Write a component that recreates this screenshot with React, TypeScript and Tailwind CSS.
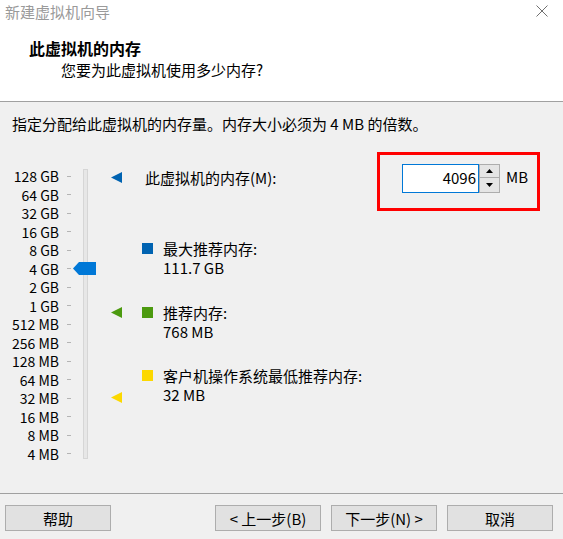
export default function App() {
  const labels = [
    "128 GB", "64 GB", "32 GB", "16 GB", "8 GB", "4 GB", "2 GB", "1 GB",
    "512 MB", "256 MB", "128 MB", "64 MB", "32 MB", "16 MB", "8 MB", "4 MB",
  ];
  return (
    <div className="w-[563px] h-[539px] bg-[#f0f0f0] flex flex-col overflow-hidden font-['Noto_Sans_CJK_SC',sans-serif] text-[15px] leading-[19px] text-black">
      {/* Header */}
      <div className="h-[102px] bg-white border-b border-[#a0a0a0] flex flex-col">
        <div className="flex justify-between items-start pl-[5px] pr-[15px] pt-[2px]">
          <span className="leading-[20px] text-[#9a9a9a]">新建虚拟机向导</span>
          <svg className="mt-[3px]" width="12" height="12" viewBox="0 0 12 12">
            <path d="M0.5 0.5 L11.5 11.5 M11.5 0.5 L0.5 11.5" stroke="#707070" strokeWidth="1" fill="none" />
          </svg>
        </div>
        <div className="mt-[16px] pl-[29px] leading-[20px] text-[16px] font-bold">此虚拟机的内存</div>
        <div className="mt-[2px] pl-[61px] leading-[20px]">您要为此虚拟机使用多少内存?</div>
      </div>

      {/* Description */}
      <div className="mt-[12px] pl-[12px] leading-[20px]">
        指定分配给此虚拟机的内存量。内存大小必须为 4 MB 的倍数。
      </div>

      {/* Main */}
      <div className="mt-[18px] flex">
        {/* Slider */}
        <div className="relative w-[142px] h-[296px] mt-[15px] flex shrink-0">
          <div className="w-[59px] flex flex-col items-end text-[14px]">
            {labels.map((l) => (
              <div key={l} className="h-[18.5px] flex items-center">
                <span className="leading-[16px] whitespace-nowrap">{l}</span>
              </div>
            ))}
          </div>
          <div className="ml-[8px] w-[4px] flex flex-col">
            {labels.map((l) => (
              <div key={l} className="h-[18.5px] flex items-center">
                <div className="w-[4px] h-[1px] bg-[#b4b4b4]" />
              </div>
            ))}
          </div>
          <div className="ml-[12px] mt-[2px] h-[290px] w-[5px] border border-[#d6d6d6] bg-[#e7e7e7]" />

          {/* thumb */}
          <svg className="absolute left-[73px] top-[95px]" width="23" height="13" viewBox="0 0 23 13">
            <polygon points="0,6.5 6,0 23,0 23,13 6,13" fill="#0078d7" />
          </svg>
          {/* markers */}
          <svg className="absolute left-[111px] top-[5px]" width="11" height="11" viewBox="0 0 11 11">
            <polygon points="0,5.5 11,0 11,11" fill="#0063b1" />
          </svg>
          <svg className="absolute left-[111px] top-[140px]" width="11" height="11" viewBox="0 0 11 11">
            <polygon points="0,5.5 11,0 11,11" fill="#4c9a0f" />
          </svg>
          <svg className="absolute left-[111px] top-[225px]" width="11" height="11" viewBox="0 0 11 11">
            <polygon points="0,5.5 11,0 11,11" fill="#fcd800" />
          </svg>
        </div>

        {/* Right column */}
        <div className="flex-1 flex flex-col">
          <div className="flex items-start">
            <span className="ml-[3px] mt-[15.5px] whitespace-nowrap">此虚拟机的内存(M):</span>
            <div className="ml-auto mr-[23px] w-[163px] h-[59px] border-[3px] border-[#ff0000] pl-[22px] pt-[9px] flex items-start">
              <div className="w-[77px] h-[29px] border border-[#0078d7] bg-white text-right pr-[2px] leading-[26px]">
                4096
              </div>
              <div className="w-[21px] h-[29px] flex flex-col">
                <div className="h-[14px] border border-[#adadad] bg-[#e5e5e5] flex items-center justify-center">
                  <svg width="7" height="4" viewBox="0 0 7 4">
                    <polygon points="3.5,0 7,4 0,4" fill="#000" />
                  </svg>
                </div>
                <div className="h-[15px] border border-t-0 border-[#adadad] bg-[#e5e5e5] flex items-center justify-center">
                  <svg width="7" height="4" viewBox="0 0 7 4">
                    <polygon points="0,0 7,0 3.5,4" fill="#000" />
                  </svg>
                </div>
              </div>
              <span className="ml-[6px] mt-[3px]">MB</span>
            </div>
          </div>

          <div className="mt-[27.5px] flex items-start">
            <div className="w-[11px] h-[11px] mt-[4px] bg-[#0063b1] shrink-0" />
            <div className="ml-[10px] flex flex-col">
              <span>最大推荐内存:</span>
              <span>111.7 GB</span>
            </div>
          </div>
          <div className="mt-[26.5px] flex items-start">
            <div className="w-[11px] h-[11px] mt-[4px] bg-[#4c9a0f] shrink-0" />
            <div className="ml-[10px] flex flex-col">
              <span>推荐内存:</span>
              <span>768 MB</span>
            </div>
          </div>
          <div className="mt-[25px] flex items-start">
            <div className="w-[11px] h-[11px] mt-[4px] bg-[#fcd800] shrink-0" />
            <div className="ml-[10px] flex flex-col">
              <span>客户机操作系统最低推荐内存:</span>
              <span>32 MB</span>
            </div>
          </div>
        </div>
      </div>

      {/* Footer */}
      <div className="mt-auto border-t border-[#a0a0a0] pt-[11px] pb-[8px] pl-[5px] pr-[10px] flex justify-between">
        <button className="w-[106px] h-[26px] border border-[#adadad] bg-[#e1e1e1] flex items-center justify-center">
          帮助
        </button>
        <div className="flex gap-[10px]">
          <button className="w-[106px] h-[26px] border border-[#adadad] bg-[#e1e1e1] flex items-center justify-center">
            &lt; 上一步(B)
          </button>
          <button className="w-[106px] h-[26px] border border-[#adadad] bg-[#e1e1e1] flex items-center justify-center">
            下一步(N) &gt;
          </button>
          <button className="w-[106px] h-[26px] border border-[#adadad] bg-[#e1e1e1] flex items-center justify-center">
            取消
          </button>
        </div>
      </div>
    </div>
  );
}
